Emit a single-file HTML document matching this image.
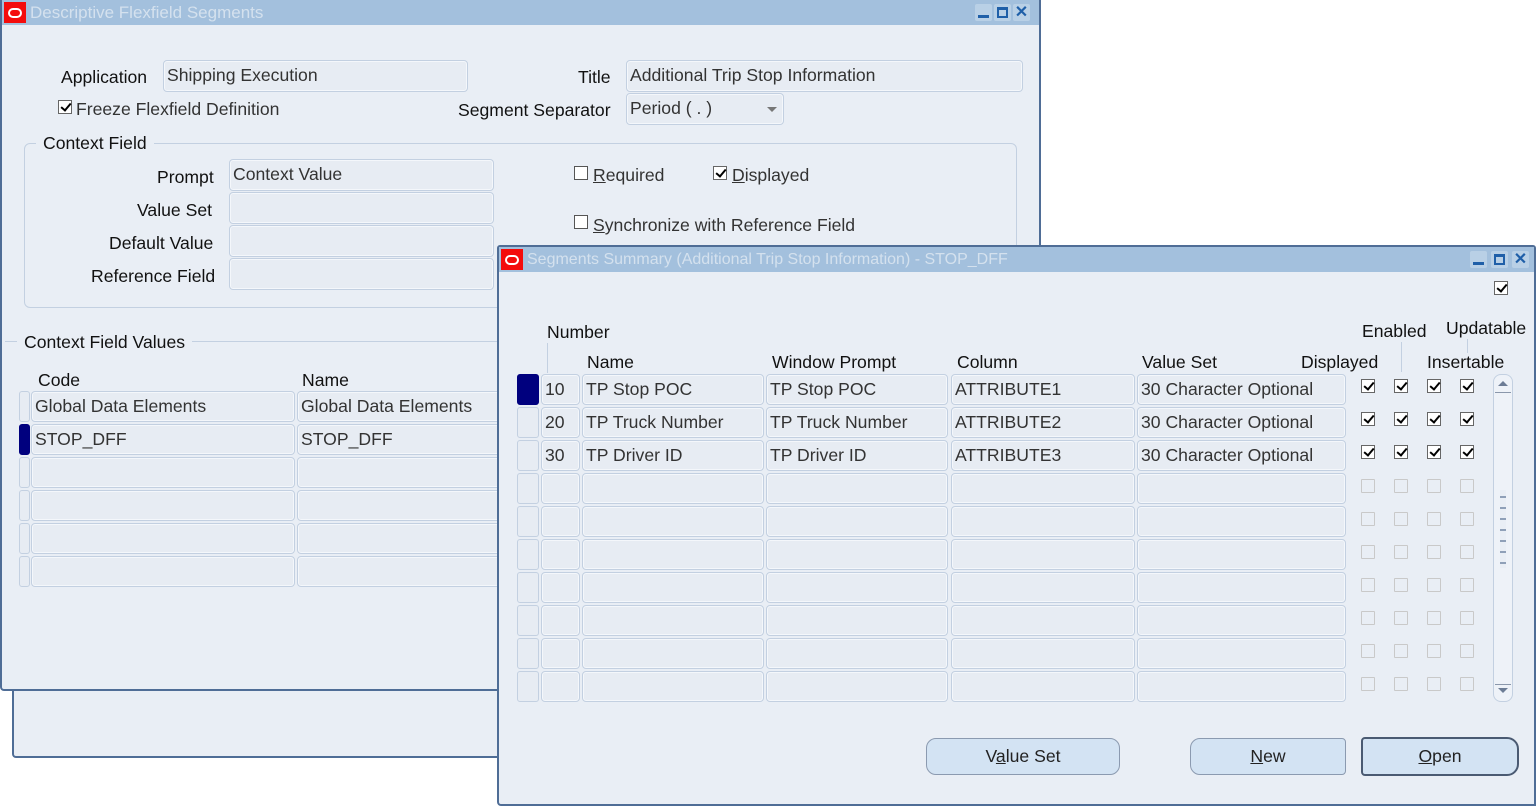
<!DOCTYPE html>
<html><head><meta charset="utf-8">
<style>
*{box-sizing:border-box;margin:0;padding:0}
body{width:1537px;height:807px;background:#fff;position:relative;overflow:hidden;font-family:"Liberation Sans",Arial,sans-serif;font-size:17.6px;color:#1a1a1a}
.a{position:absolute}
.win{position:absolute;background:#e9eef5;border:2px solid #4f6d96;border-top:none}
.tb{position:absolute;left:0;right:0;top:0;height:25px;background:#a3c0dd;color:#d4e1ee;font-size:17px;line-height:25px;padding-left:28px;white-space:nowrap}
.logo{position:absolute;left:2px;top:2px;width:22px;height:21px;background:#f40c0c}
.logo:after{content:"";position:absolute;left:4px;top:6px;width:10px;height:6px;border:2px solid #fff;border-radius:5px}
.wb{position:absolute;top:4px;width:17px;height:17px;background:#b9d0e6;border-radius:2px}
.f{position:absolute;border:1px solid #c3d0e1;border-radius:4px;background:#e7ecf3;box-shadow:inset 0 0 0 1px #f4f7fb;color:#333;padding-left:3px;white-space:nowrap;overflow:hidden;line-height:29px}
.l{position:absolute;white-space:nowrap;color:#111}
.cb{position:absolute;width:14px;height:14px;border:1px solid #666;background:#fff}
.k:after{content:"";position:absolute;left:3.5px;top:0px;width:4px;height:8px;border-right:2.5px solid #000;border-bottom:2.5px solid #000;transform:rotate(40deg)}
.ce{position:absolute;width:14px;height:14px;border:1px solid #c9c9c9;border-radius:1px}
.ind{position:absolute;border:1px solid #c3d0e1;border-radius:3px;background:#e7ecf3}
.sel{background:#00007e;border-color:#00007e}
.btn{position:absolute;height:37px;border:1px solid #8b9ab0;border-radius:10px;background:#d3e3f3;text-align:center;line-height:35px;color:#222}
.grp{position:absolute;border:1px solid #c3d0e1;border-radius:6px}
u{text-decoration:underline}
</style></head><body>

<div class="a" style="left:12px;top:688px;width:488px;height:70px;background:#e9eef5;border:2px solid #4f6d96;border-top:none;border-radius:0 0 0 4px"></div>

<div class="win" style="left:0;top:0;width:1041px;height:691px;border-radius:0 0 0 4px">
 <div class="tb">Descriptive Flexfield Segments<div class="logo"></div>
  <div class="wb" style="left:973px"><div class="a" style="left:3px;top:11px;width:11px;height:3px;background:#1f5fa8"></div></div>
  <div class="wb" style="left:992px"><div class="a" style="left:3px;top:3px;width:11px;height:11px;border:2px solid #1f5fa8;border-top-width:3px"></div></div>
  <div class="wb" style="left:1011px;color:#1f5fa8;font-weight:bold;font-size:16px;line-height:17px;text-align:center">✕</div>
 </div>
 <div class="a" style="left:-2px;top:0;width:1041px;height:691px">
 <div class="l" style="left:61px;top:67px">Application</div>
 <div class="f" style="left:163px;top:60px;width:305px;height:32px">Shipping Execution</div>
 <div class="cb k" style="left:58px;top:100px"></div>
 <div class="l" style="left:76px;top:99px;color:#333">Freeze Flexfield Definition</div>
 <div class="l" style="left:578px;top:67px">Title</div>
 <div class="f" style="left:626px;top:60px;width:397px;height:32px">Additional Trip Stop Information</div>
 <div class="l" style="left:458px;top:100px">Segment Separator</div>
 <div class="f" style="left:626px;top:93px;width:158px;height:32px">Period ( . )<span class="a" style="left:140px;top:13px;border:5px solid transparent;border-top:5px solid #777"></span></div>

 <div class="grp" style="left:24px;top:143px;width:993px;height:165px"></div>
 <div class="l" style="left:36px;top:133px;background:#e9eef5;padding:0 7px">Context Field</div>
 <div class="l" style="left:157px;top:167px">Prompt</div>
 <div class="f" style="left:229px;top:159px;width:265px;height:32px">Context Value</div>
 <div class="l" style="left:137px;top:200px">Value Set</div>
 <div class="f" style="left:229px;top:192px;width:265px;height:32px"></div>
 <div class="l" style="left:109px;top:233px">Default Value</div>
 <div class="f" style="left:229px;top:225px;width:265px;height:32px"></div>
 <div class="l" style="left:91px;top:266px">Reference Field</div>
 <div class="f" style="left:229px;top:258px;width:265px;height:32px"></div>
 <div class="cb" style="left:574px;top:166px;border-color:#555"></div>
 <div class="l" style="left:593px;top:165px;color:#333"><u>R</u>equired</div>
 <div class="cb k" style="left:713px;top:166px"></div>
 <div class="l" style="left:732px;top:165px;color:#333"><u>D</u>isplayed</div>
 <div class="cb" style="left:574px;top:215px;border-color:#555"></div>
 <div class="l" style="left:593px;top:215px;color:#333"><u>S</u>ynchronize with Reference Field</div>

 <div class="a" style="left:5px;top:341px;width:1030px;height:1px;background:#c3d0e1"></div>
 <div class="l" style="left:17px;top:332px;background:#e9eef5;padding:0 7px">Context Field Values</div>
 <div class="l" style="left:38px;top:370px">Code</div>
 <div class="l" style="left:302px;top:370px">Name</div>
 <div class="ind" style="left:19px;top:391px;width:11px;height:31px"></div>
 <div class="f" style="left:31px;top:391px;width:264px;height:31px">Global Data Elements</div>
 <div class="f" style="left:297px;top:391px;width:210px;height:31px">Global Data Elements</div>
 <div class="ind sel" style="left:19px;top:424px;width:11px;height:31px"></div>
 <div class="f" style="left:31px;top:424px;width:264px;height:31px">STOP_DFF</div>
 <div class="f" style="left:297px;top:424px;width:210px;height:31px">STOP_DFF</div>
 <div class="ind" style="left:19px;top:457px;width:11px;height:31px"></div><div class="f" style="left:31px;top:457px;width:264px;height:31px"></div><div class="f" style="left:297px;top:457px;width:210px;height:31px"></div>
 <div class="ind" style="left:19px;top:490px;width:11px;height:31px"></div><div class="f" style="left:31px;top:490px;width:264px;height:31px"></div><div class="f" style="left:297px;top:490px;width:210px;height:31px"></div>
 <div class="ind" style="left:19px;top:523px;width:11px;height:31px"></div><div class="f" style="left:31px;top:523px;width:264px;height:31px"></div><div class="f" style="left:297px;top:523px;width:210px;height:31px"></div>
 <div class="ind" style="left:19px;top:556px;width:11px;height:31px"></div><div class="f" style="left:31px;top:556px;width:264px;height:31px"></div><div class="f" style="left:297px;top:556px;width:210px;height:31px"></div>
 </div>
</div>

<div class="win" style="left:497px;top:245px;width:1039px;height:561px;border-top:2px solid #4f6d96;border-radius:3px 3px 0 4px">
 <div class="tb" style="font-size:16px">Segments Summary (Additional Trip Stop Information) - STOP_DFF<div class="logo"></div>
  <div class="wb" style="left:971px"><div class="a" style="left:3px;top:11px;width:11px;height:3px;background:#1f5fa8"></div></div>
  <div class="wb" style="left:992px"><div class="a" style="left:3px;top:3px;width:11px;height:11px;border:2px solid #1f5fa8;border-top-width:3px"></div></div>
  <div class="wb" style="left:1013px;color:#1f5fa8;font-weight:bold;font-size:16px;line-height:17px;text-align:center">✕</div>
 </div>
</div>
<div class="cb k" style="left:1494px;top:281px"></div>
<div class="l" style="left:547px;top:322px">Number</div>
<div class="a" style="left:547px;top:343px;width:1px;height:30px;background:#c3d0e1"></div>
<div class="l" style="left:587px;top:352px">Name</div>
<div class="l" style="left:772px;top:352px">Window Prompt</div>
<div class="l" style="left:957px;top:352px">Column</div>
<div class="l" style="left:1142px;top:352px">Value Set</div>
<div class="l" style="left:1301px;top:352px">Displayed</div>
<div class="l" style="left:1362px;top:321px">Enabled</div>
<div class="a" style="left:1401px;top:342px;width:1px;height:30px;background:#c3d0e1"></div>
<div class="l" style="left:1446px;top:318px">Updatable</div>
<div class="a" style="left:1467px;top:339px;width:1px;height:14px;background:#c3d0e1"></div>
<div class="l" style="left:1427px;top:352px">Insertable</div>

<div id="rows">
 <div class="ind sel" style="left:517px;top:374px;width:22px;height:31px"></div>
 <div class="f" style="left:541px;top:374px;width:39px;height:31px">10</div>
 <div class="f" style="left:582px;top:374px;width:182px;height:31px">TP Stop POC</div>
 <div class="f" style="left:766px;top:374px;width:182px;height:31px">TP Stop POC</div>
 <div class="f" style="left:951px;top:374px;width:184px;height:31px">ATTRIBUTE1</div>
 <div class="f" style="left:1137px;top:374px;width:209px;height:31px">30 Character Optional</div>
 <div class="cb k" style="left:1361px;top:379px"></div><div class="cb k" style="left:1394px;top:379px"></div><div class="cb k" style="left:1427px;top:379px"></div><div class="cb k" style="left:1460px;top:379px"></div>

 <div class="ind" style="left:517px;top:407px;width:22px;height:31px"></div>
 <div class="f" style="left:541px;top:407px;width:39px;height:31px">20</div>
 <div class="f" style="left:582px;top:407px;width:182px;height:31px">TP Truck Number</div>
 <div class="f" style="left:766px;top:407px;width:182px;height:31px">TP Truck Number</div>
 <div class="f" style="left:951px;top:407px;width:184px;height:31px">ATTRIBUTE2</div>
 <div class="f" style="left:1137px;top:407px;width:209px;height:31px">30 Character Optional</div>
 <div class="cb k" style="left:1361px;top:412px"></div><div class="cb k" style="left:1394px;top:412px"></div><div class="cb k" style="left:1427px;top:412px"></div><div class="cb k" style="left:1460px;top:412px"></div>

 <div class="ind" style="left:517px;top:440px;width:22px;height:31px"></div>
 <div class="f" style="left:541px;top:440px;width:39px;height:31px">30</div>
 <div class="f" style="left:582px;top:440px;width:182px;height:31px">TP Driver ID</div>
 <div class="f" style="left:766px;top:440px;width:182px;height:31px">TP Driver ID</div>
 <div class="f" style="left:951px;top:440px;width:184px;height:31px">ATTRIBUTE3</div>
 <div class="f" style="left:1137px;top:440px;width:209px;height:31px">30 Character Optional</div>
 <div class="cb k" style="left:1361px;top:445px"></div><div class="cb k" style="left:1394px;top:445px"></div><div class="cb k" style="left:1427px;top:445px"></div><div class="cb k" style="left:1460px;top:445px"></div>
</div>
<script>
(function(){var h='';for(var i=3;i<10;i++){var t=374+i*33;
h+='<div class="ind" style="left:517px;top:'+t+'px;width:22px;height:31px"></div>'+
'<div class="f" style="left:541px;top:'+t+'px;width:39px;height:31px"></div>'+
'<div class="f" style="left:582px;top:'+t+'px;width:182px;height:31px"></div>'+
'<div class="f" style="left:766px;top:'+t+'px;width:182px;height:31px"></div>'+
'<div class="f" style="left:951px;top:'+t+'px;width:184px;height:31px"></div>'+
'<div class="f" style="left:1137px;top:'+t+'px;width:209px;height:31px"></div>';
[1361,1394,1427,1460].forEach(function(x){h+='<div class="ce" style="left:'+x+'px;top:'+(t+6)+'px"></div>';});}
document.getElementById('rows').insertAdjacentHTML('beforeend',h);})();
</script>

<div class="a" style="left:1493px;top:374px;width:20px;height:328px;border:1px solid #c3d0e1;border-radius:8px;background:#eef2f8"></div>
<div class="a" style="left:1498px;top:381px;border:5px solid transparent;border-bottom:5px solid #6c7c95;border-top:none"></div>
<div class="a" style="left:1495px;top:392px;width:16px;height:1px;background:#8a97ab"></div>
<div class="a" style="left:1495px;top:684px;width:16px;height:1px;background:#8a97ab"></div>
<div class="a" style="left:1498px;top:688px;border:5px solid transparent;border-top:5px solid #6c7c95;border-bottom:none"></div>
<div class="a" style="left:1500px;top:490px;width:6px;height:78px;background:repeating-linear-gradient(#e9eef5 0,#e9eef5 6px,#8fa0b8 6px,#8fa0b8 8px,#e9eef5 8px,#e9eef5 11px)"></div>

<div class="btn" style="left:926px;top:738px;width:194px">V<u>a</u>lue Set</div>
<div class="btn" style="left:1190px;top:738px;width:156px;border-radius:10px 4px 4px 10px"><u>N</u>ew</div>
<div class="btn" style="left:1361px;top:737px;width:158px;height:39px;border:2px solid #4a5a72;border-radius:4px 12px 12px 4px"><u>O</u>pen</div>
</body></html>
